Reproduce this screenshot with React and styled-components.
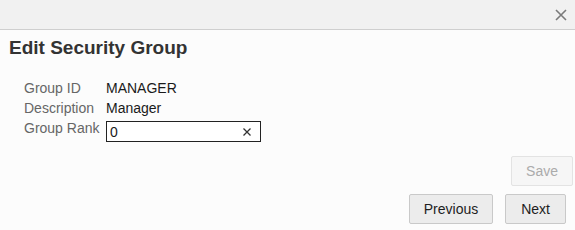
import React from "react";
import styled, { createGlobalStyle } from "styled-components";

const Global = createGlobalStyle`
  html, body { margin: 0; padding: 0; background: #fcfcfc; }
  body { font-family: "Liberation Sans", Arial, sans-serif; }
`;

const Dialog = styled.div`
  width: 575px;
  height: 230px;
  background: #fcfcfc;
  display: flex;
  flex-direction: column;
`;

const Header = styled.div`
  height: 29px;
  background: #f1f1f1;
  border-bottom: 1px solid #cfcfcf;
  display: flex;
  align-items: center;
  justify-content: flex-end;
  padding-right: 8px;
`;

const CloseBtn = styled.button`
  width: 12px;
  height: 12px;
  padding: 0;
  border: 0;
  background: transparent;
  display: flex;
  align-items: center;
  justify-content: center;
  cursor: pointer;
`;

const Title = styled.h1`
  margin: 7px 0 0 9px;
  font-size: 19px;
  line-height: 22px;
  font-weight: bold;
  color: #333;
`;

const Form = styled.div`
  display: grid;
  grid-template-columns: 82px auto;
  grid-auto-rows: 20px;
  margin: 19px 0 0 24px;
  font-size: 14px;
  line-height: 20px;
`;

const Label = styled.div`
  color: #666;
`;

const Value = styled.div`
  color: #1a1a1a;
`;

const InputBox = styled.div`
  margin-top: 3px;
  width: 155px;
  height: 21px;
  box-sizing: border-box;
  border: 1px solid #222;
  background: #fff;
  display: flex;
  align-items: center;
  padding: 0 9px 0 3px;
`;

const Input = styled.input`
  flex: 1;
  min-width: 0;
  border: 0;
  outline: none;
  padding: 0;
  background: transparent;
  font-family: "Liberation Sans", Arial, sans-serif;
  font-size: 14px;
  color: #1a1a1a;
`;

const ClearBtn = styled.span`
  display: flex;
  align-items: center;
`;

const ButtonRow = styled.div`
  display: flex;
  justify-content: flex-end;
  gap: 12px;
  margin-top: ${(p) => p.$top}px;
  padding-right: ${(p) => p.$right}px;
`;

const Button = styled.button`
  height: 30px;
  box-sizing: border-box;
  padding: 0 ${(p) => p.$pad || 15}px;
  border: 1px solid ${(p) => (p.disabled ? "#e3e3e3" : "#c9c9c9")};
  border-radius: 2px;
  background: ${(p) => (p.disabled ? "#f6f6f6" : "#ececec")};
  color: ${(p) => (p.disabled ? "#ababab" : "#1e1e1e")};
  font-family: "Liberation Sans", Arial, sans-serif;
  font-size: 14px;
`;

export default function App() {
  return (
    <>
      <Global />
      <Dialog>
        <Header>
          <CloseBtn aria-label="Close">
            <svg width="12" height="12" viewBox="0 0 12 12">
              <path d="M1 1L11 11M11 1L1 11" stroke="#7a7a7a" strokeWidth="1.6" />
            </svg>
          </CloseBtn>
        </Header>
        <Title>Edit Security Group</Title>
        <Form>
          <Label>Group ID</Label>
          <Value>MANAGER</Value>
          <Label>Description</Label>
          <Value>Manager</Value>
          <Label>Group Rank</Label>
          <InputBox>
            <Input defaultValue="0" />
            <ClearBtn>
              <svg width="8" height="8" viewBox="0 0 8 8">
                <path d="M0.5 0.5L7.5 7.5M7.5 0.5L0.5 7.5" stroke="#333" strokeWidth="1.3" />
              </svg>
            </ClearBtn>
          </InputBox>
        </Form>
        <ButtonRow $top={18} $right={2}>
          <Button disabled $pad={14}>Save</Button>
        </ButtonRow>
        <ButtonRow $top={8} $right={9}>
          <Button $pad={14}>Previous</Button>
          <Button>Next</Button>
        </ButtonRow>
      </Dialog>
    </>
  );
}
